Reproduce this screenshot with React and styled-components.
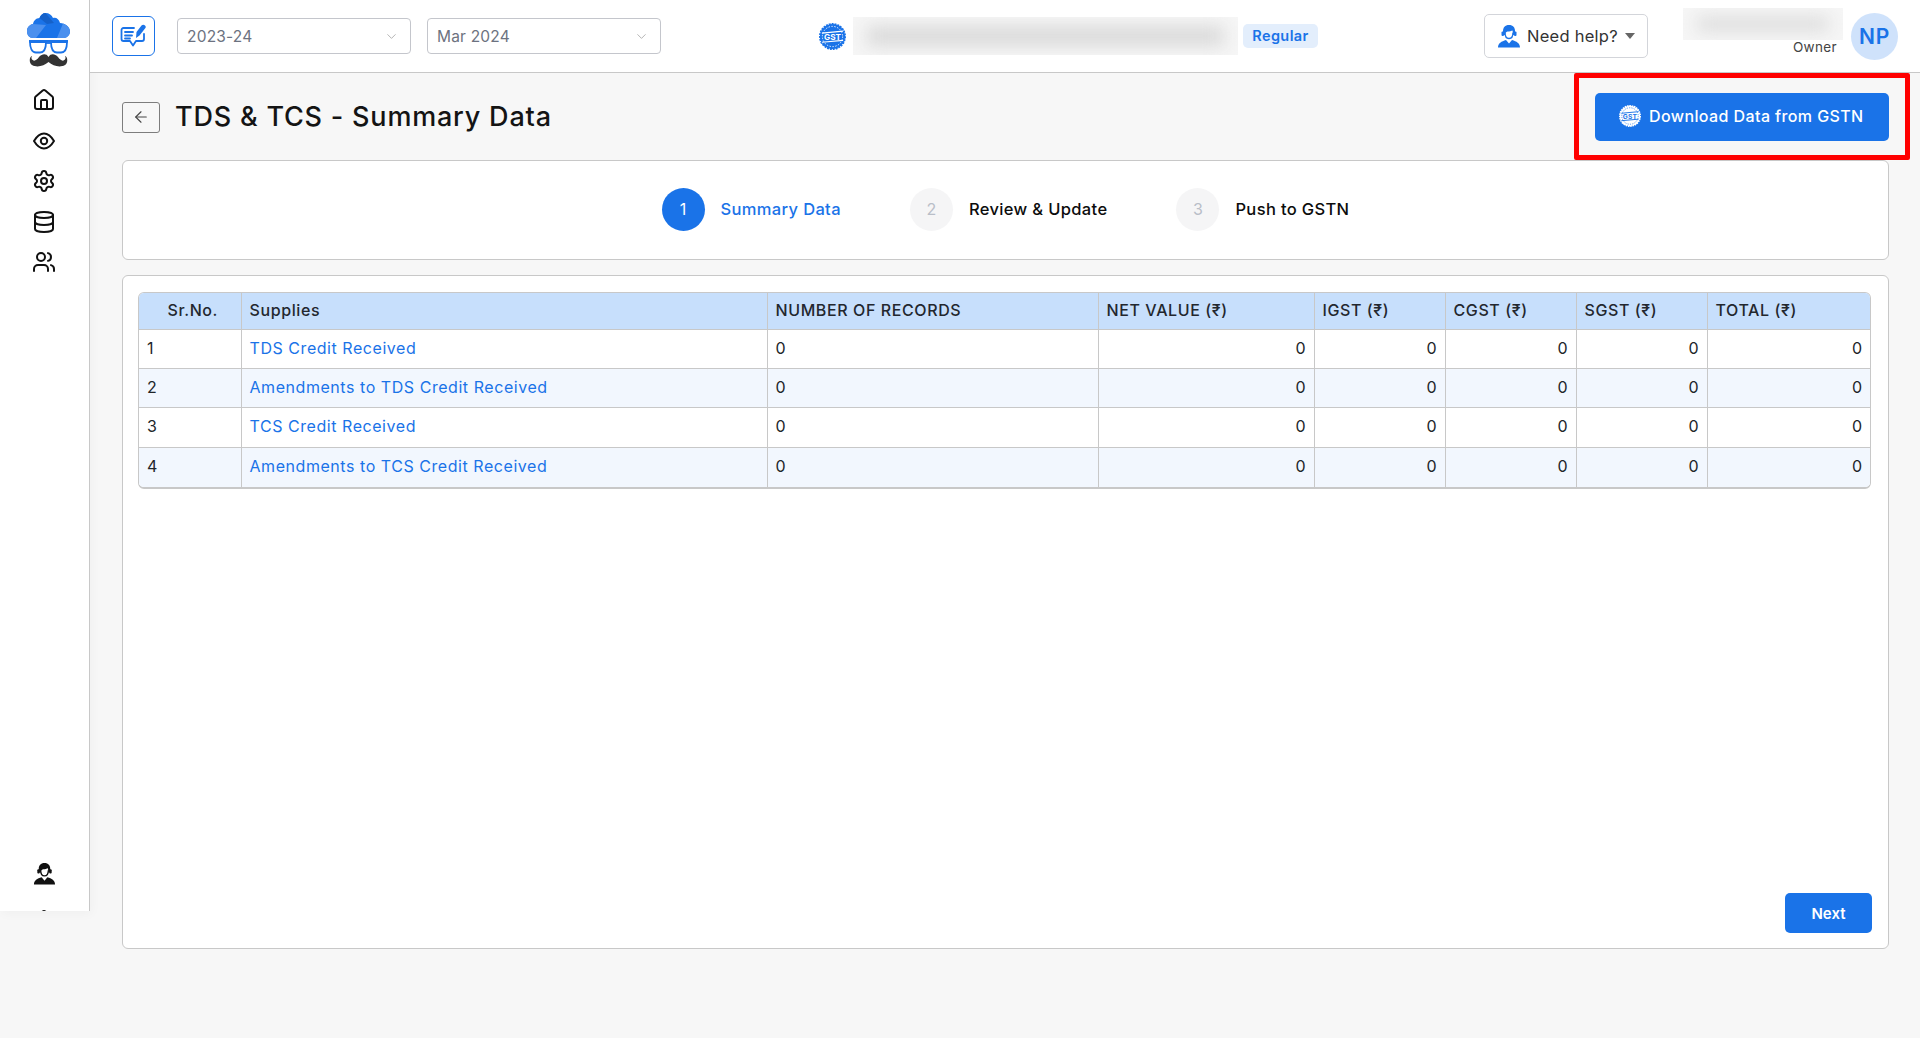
import React from "react";
import styled, {createGlobalStyle} from "styled-components";
import {House, Settings, Database, Users, ArrowLeft, ChevronDown} from "lucide-react";

const blue = "#1a73e8";
const line = "#c8c8c8";

const GlobalStyle = createGlobalStyle`
  html, body {
    margin: 0;
    padding: 0;
    background: #f7f7f7;
    font-family: Inter, "Noto Sans", sans-serif;
    color: #212529;
  }
  * {
    box-sizing: border-box;
  }
`;

const Page = styled.div`
  display: flex;
  align-items: flex-start;
  width: 1920px;
  min-height: 1038px;
  background: #f7f7f7;
`;

const Sidebar = styled.aside`
  flex: 0 0 90px;
  height: 911px;
  display: flex;
  flex-direction: column;
  align-items: center;
  padding: 13px 1px 0 0;
  background: #fff;
  border-right: 1px solid ${line};
  box-shadow: 2px 3px 10px rgba(0, 0, 0, 0.03);
  overflow: hidden;

  svg {
    flex-shrink: 0;
  }
`;

const LogoWrap = styled.div`
  height: 54px;
  margin-left: 8px;
`;

const SideNav = styled.nav`
  display: flex;
  flex-direction: column;
  gap: 16.5px;
  margin-top: 21px;
  color: #111;
`;

const SideBottom = styled.div`
  display: flex;
  flex-direction: column;
  align-items: center;
  gap: 24px;
  margin-top: 588px;
  color: #111;
`;

const Main = styled.div`
  flex: 1;
  min-width: 0;
`;

const TopBar = styled.header`
  height: 73px;
  display: flex;
  align-items: center;
  padding: 0 22px;
  background: #fff;
  border-bottom: 1px solid ${line};
`;

const EditButton = styled.button`
  width: 43px;
  height: 40px;
  margin-right: 22px;
  padding: 0;
  display: flex;
  align-items: center;
  justify-content: center;
  background: #fff;
  border: 1px solid ${blue};
  border-radius: 6px;
`;

const SelectBox = styled.div`
  width: 234px;
  height: 36px;
  margin-right: 16px;
  padding: 0 11px 0 9px;
  display: flex;
  align-items: center;
  justify-content: space-between;
  border: 1px solid #c4c6cc;
  border-radius: 4px;
  background: #fff;
  color: #6c7280;
  font-size: 15.5px;
  letter-spacing: 0.2px;
`;

const GstGroup = styled.div`
  margin-left: 142px;
  display: flex;
  align-items: center;
`;

const BlurBox = styled.div`
  position: relative;
  width: 385px;
  height: 38px;
  margin: 0 5px 0 7px;
  overflow: hidden;
  background: #f6f6f6;

  &::before {
    content: "";
    position: absolute;
    inset: 10px 14px;
    background: #d6d6d6;
    filter: blur(9px);
  }
`;

const Badge = styled.span`
  width: 75px;
  height: 24px;
  display: flex;
  align-items: center;
  justify-content: center;
  padding-bottom: 1px;
  border-radius: 5px;
  background: #e3eefc;
  color: ${blue};
  font-size: 14.5px;
  font-weight: 600;
  letter-spacing: 0.4px;
`;

const HelpButton = styled.button`
  margin-left: auto;
  width: 164px;
  height: 44px;
  padding: 0 0 0 12px;
  display: flex;
  align-items: center;
  gap: 6px;
  background: #fff;
  border: 1px solid #d3d5da;
  border-radius: 5px;
  color: #333;
  font-family: inherit;
  font-size: 16.5px;
  letter-spacing: 0.25px;
`;

const Caret = styled.span`
  width: 0;
  height: 0;
  margin-left: 1px;
  border-left: 5.5px solid transparent;
  border-right: 5.5px solid transparent;
  border-top: 6px solid #666;
`;

const UserBlock = styled.div`
  align-self: flex-start;
  width: 160px;
  margin: 8px 8px 0 35px;
  text-align: right;
`;

const BlurName = styled(BlurBox)`
  width: 160px;
  height: 32px;
  margin: 0;
`;

const Role = styled.div`
  padding-right: 6px;
  font-size: 13.5px;
  line-height: 15px;
  color: #444;
  letter-spacing: 0.35px;
`;

const Avatar = styled.div`
  width: 47px;
  height: 47px;
  display: flex;
  align-items: center;
  justify-content: center;
  border-radius: 50%;
  background: #cfe2fb;
  color: ${blue};
  font-size: 21px;
  font-weight: 600;
  letter-spacing: 0.8px;
`;

const Content = styled.main`
  padding: 20px 31px 0 32px;
`;

const PageHead = styled.div`
  position: relative;
  height: 48px;
  display: flex;
  align-items: center;
`;

const BackButton = styled.button`
  width: 38px;
  height: 31px;
  margin-right: 15px;
  padding: 0;
  display: flex;
  align-items: center;
  justify-content: center;
  background: #f7f7f7;
  border: 1px solid #7d7d7d;
  border-radius: 3px;
  color: #444;
`;

const Title = styled.h1`
  margin: 0 0 2px;
  font-size: 27px;
  font-weight: 500;
  letter-spacing: 0.8px;
  color: #141414;
`;

const DownloadButton = styled.button`
  margin-left: auto;
  width: 294px;
  height: 48px;
  padding: 0 0 2px 24px;
  display: flex;
  align-items: center;
  gap: 8px;
  background: ${blue};
  border: none;
  border-radius: 5px;
  color: #fff;
  font-family: inherit;
  font-size: 16px;
  font-weight: 500;
  letter-spacing: 0.4px;
`;

const RedMark = styled.div`
  position: absolute;
  top: -20px;
  right: -21px;
  width: 336px;
  height: 87px;
  border: 5px solid #f00;
  border-radius: 2px;
  pointer-events: none;
`;

const StepsCard = styled.section`
  height: 100px;
  margin-top: 19px;
  display: flex;
  align-items: center;
  justify-content: center;
  gap: 69px;
  padding-bottom: 2px;
  background: #fff;
  border: 1px solid ${line};
  border-radius: 6px;
`;

const Step = styled.div`
  display: flex;
  align-items: center;
  gap: 16px;
`;

const StepDot = styled.span`
  width: 43px;
  height: 43px;
  display: flex;
  align-items: center;
  justify-content: center;
  border-radius: 50%;
  background: ${p => (p.$active ? blue : "#f5f5f6")};
  color: ${p => (p.$active ? "#fff" : "#b9bec8")};
  font-size: 16px;
`;

const StepLabel = styled.span`
  font-size: 16.5px;
  font-weight: 500;
  letter-spacing: 0.35px;
  color: ${p => (p.$active ? blue : "#0c0c0c")};
`;

const TableCard = styled.section`
  height: 674px;
  margin-top: 15px;
  padding: 16px 17px 15px 15px;
  display: flex;
  flex-direction: column;
  background: #fff;
  border: 1px solid ${line};
  border-radius: 6px;
`;

const TableWrap = styled.div`
  border: 1px solid ${line};
  border-bottom-width: 2px;
  border-radius: 6px;
  overflow: hidden;
`;

const Table = styled.table`
  width: 100%;
  table-layout: fixed;
  border-collapse: collapse;
  font-size: 16px;
`;

const HeadCell = styled.th`
  height: 36px;
  padding: ${p => (p.$center ? "0 5px 2px 11px" : "0 8px 2px")};
  background: #c7dffc;
  border-left: 1px solid ${line};
  border-bottom: 1px solid ${line};
  text-align: ${p => (p.$center ? "center" : "left")};
  font-weight: 550;
  color: #23272e;
  letter-spacing: 0.6px;
  white-space: nowrap;

  &:first-child {
    border-left: none;
  }
`;

const Row = styled.tr`
  background: ${p => (p.$alt ? "#f2f7fe" : "#fff")};
`;

const Cell = styled.td`
  height: 39.4px;
  padding: 0 8px 2px;
  border-left: 1px solid ${line};
  border-bottom: 1px solid ${line};
  text-align: ${p => (p.$right ? "right" : "left")};

  &:first-child {
    border-left: none;
  }

  tr:last-child > & {
    border-bottom: none;
  }
`;

const RowLink = styled.a`
  color: ${blue};
  text-decoration: none;
  letter-spacing: 0.55px;
`;

const NextButton = styled.button`
  margin-top: auto;
  align-self: flex-end;
  width: 87px;
  height: 40px;
  margin-right: -1px;
  background: ${blue};
  border: none;
  border-radius: 5px;
  color: #fff;
  font-family: inherit;
  font-size: 15px;
  font-weight: 600;
`;

function Logo() {
    return (
        <svg width="43" height="54" viewBox="0 0 43 54">
            <path fill="#1a73e8" d="M6 25C2 25 0 22 0 18C0 14 3 11.5 6 11C6.5 8 9 5 12.5 5C13.5 2 16 0 18.5 0C22 0 25 2 26 5C29 4 32 6 33 10C38 10 43 14 43 18.5C43 22 40 25 37 25Z"/>
            <path fill="#4b90ee" d="M6 25C2 25 0 22 0 18C0 14 3 11.5 6 11L19 12L9 25ZM30 25L36 10.5C40 12 43 15 43 18.5C43 22 40 25 37 25Z"/>
            <path fill="#1561c9" d="M12.5 5C13.5 2 16 0 18.5 0L27 10L20 11Z"/>
            <g fill="none" stroke="#1a73e8" strokeWidth="1.8">
                <path d="M3 29H19C19 34 18 39.5 13 39.5H9C5 39.5 3 35 3 29Z"/>
                <path d="M24 29H40C40 35 38 39.5 34 39.5H30C25 39.5 24 34 24 29Z"/>
                <path d="M19 30H24"/>
            </g>
            <path fill="#1a73e8" d="M2 27H41V29.5H2Z"/>
            <path fill="#333" d="M21.5 44C19 40 15 41 12 44C10 47 7 49 5 46.5C4 45 4.5 44 5 43C2 44 2 50 5 52C10 55 17 53 21.5 49C26 53 33 55 38 52C41 50 41 44 38 43C38.5 44 39 45 38 46.5C36 49 33 47 31 44C28 41 24 40 21.5 44Z"/>
        </svg>
    );
}

function EditIcon() {
    return (
        <svg width="27" height="24" viewBox="0 0 27 24" fill="none" stroke="#1a73e8" strokeWidth="1.8" strokeLinecap="round" strokeLinejoin="round">
            <path d="M14 4H3.5A2 2 0 0 0 1.5 6V15A2 2 0 0 0 3.5 17H10L13 21.5L16 17H22A2 2 0 0 0 24 15V10"/>
            <path d="M5 8H13M5 11.5H12M5 14.5H10"/>
            <path fill="#1a73e8" stroke="none" d="M16 14L16.5 8L21.5 1.5C22.5 0.5 24 0.5 25 1.5C26 2.5 26 3.5 25 4.5L19.5 11.5Z"/>
        </svg>
    );
}

function GstSeal({size, bg, fg}) {
    return (
        <svg width={size} height={size} viewBox="0 0 28 28">
            <circle cx="14" cy="14" r="13" fill={bg} stroke={bg} strokeWidth="2" strokeDasharray="2 1"/>
            <circle cx="14" cy="14" r="10.5" fill="none" stroke={fg} strokeWidth="0.9" strokeDasharray="1.5 1.5"/>
            <path fill="none" stroke={fg} strokeWidth="1.2" d="M3 10.5L25 8.5M3 20L25 18"/>
            <text x="14" y="18" textAnchor="middle" fontSize="8.5" fontWeight="700" fontFamily="Inter, sans-serif" fill={fg}>GST</text>
        </svg>
    );
}

function AgentIcon({color, size}) {
    return (
        <svg width={size} height={size} viewBox="0 0 24 24" fill={color}>
            <path d="M12 1C8 1 6 3.6 6 7V11H8C8 9 9 8 10.5 7.5C12.5 7.5 14.5 7 15.5 6.5C16 8 16 9.5 16 11H18V7C18 3.6 16 1 12 1Z"/>
            <path fill="none" stroke={color} strokeWidth="1.4" d="M8 8.5C8 12.5 9.8 14.5 12 14.5C14.2 14.5 16 12.5 16 8.5"/>
            <rect x="4.5" y="7.5" width="2.5" height="4.5" rx="1"/>
            <rect x="17" y="7.5" width="2.5" height="4.5" rx="1"/>
            <path d="M1 23.5C1 19 4.5 17.5 9 16L12 19.5L15 16C19.5 17.5 23 19 23 23.5Z"/>
        </svg>
    );
}

function EyeIcon() {
    return (
        <svg width="24" height="24" viewBox="0 0 24 24" fill="none" stroke="currentColor" strokeWidth="2" strokeLinejoin="round">
            <path d="M2 12C5 7 8.5 4.5 12 4.5C15.5 4.5 19 7 22 12C19 17 15.5 19.5 12 19.5C8.5 19.5 5 17 2 12Z"/>
            <circle cx="12" cy="12" r="3.2"/>
        </svg>
    );
}

const rows = [
    {no: 1, name: "TDS Credit Received"},
    {no: 2, name: "Amendments to TDS Credit Received"},
    {no: 3, name: "TCS Credit Received"},
    {no: 4, name: "Amendments to TCS Credit Received"},
];

const colWidths = [102, 526, 331, 216, 131, 131, 131, 163];

const heads = ["Supplies", "NUMBER OF RECORDS", "NET VALUE (₹)", "IGST (₹)", "CGST (₹)", "SGST (₹)", "TOTAL (₹)"];

const steps = [
    {n: 1, label: "Summary Data", active: true},
    {n: 2, label: "Review & Update"},
    {n: 3, label: "Push to GSTN"},
];

export default function App() {
    return (
        <>
            <GlobalStyle/>
            <Page>
                <Sidebar>
                    <LogoWrap><Logo/></LogoWrap>
                    <SideNav>
                        <House size={24}/>
                        <EyeIcon/>
                        <Settings size={24}/>
                        <Database size={24}/>
                        <Users size={24}/>
                    </SideNav>
                    <SideBottom>
                        <AgentIcon color="#111" size={23}/>
                        <House size={24}/>
                    </SideBottom>
                </Sidebar>

                <Main>
                    <TopBar>
                        <EditButton><EditIcon/></EditButton>
                        <SelectBox>2023-24<ChevronDown size={15} strokeWidth={1} color="#888"/></SelectBox>
                        <SelectBox>Mar 2024<ChevronDown size={15} strokeWidth={1} color="#888"/></SelectBox>
                        <GstGroup>
                            <GstSeal size={27} bg={blue} fg="#fff"/>
                            <BlurBox/>
                            <Badge>Regular</Badge>
                        </GstGroup>
                        <HelpButton>
                            <AgentIcon color={blue} size={24}/>
                            Need help?
                            <Caret/>
                        </HelpButton>
                        <UserBlock>
                            <BlurName/>
                            <Role>Owner</Role>
                        </UserBlock>
                        <Avatar>NP</Avatar>
                    </TopBar>

                    <Content>
                        <PageHead>
                            <BackButton><ArrowLeft size={18} strokeWidth={1.5}/></BackButton>
                            <Title>TDS &amp; TCS - Summary Data</Title>
                            <DownloadButton>
                                <GstSeal size={22} bg="#fff" fg={blue}/>
                                Download Data from GSTN
                            </DownloadButton>
                            <RedMark/>
                        </PageHead>

                        <StepsCard>
                            {steps.map(s => (
                                <Step key={s.n}>
                                    <StepDot $active={s.active}>{s.n}</StepDot>
                                    <StepLabel $active={s.active}>{s.label}</StepLabel>
                                </Step>
                            ))}
                        </StepsCard>

                        <TableCard>
                            <TableWrap>
                                <Table>
                                    <colgroup>
                                        {colWidths.map((w, i) => <col key={i} style={{width: w}}/>)}
                                    </colgroup>
                                    <thead>
                                        <tr>
                                            <HeadCell $center>Sr.No.</HeadCell>
                                            {heads.map(h => <HeadCell key={h}>{h}</HeadCell>)}
                                        </tr>
                                    </thead>
                                    <tbody>
                                        {rows.map(r => (
                                            <Row key={r.no} $alt={r.no % 2 === 0}>
                                                <Cell>{r.no}</Cell>
                                                <Cell><RowLink href="#">{r.name}</RowLink></Cell>
                                                <Cell>0</Cell>
                                                <Cell $right>0</Cell>
                                                <Cell $right>0</Cell>
                                                <Cell $right>0</Cell>
                                                <Cell $right>0</Cell>
                                                <Cell $right>0</Cell>
                                            </Row>
                                        ))}
                                    </tbody>
                                </Table>
                            </TableWrap>
                            <NextButton>Next</NextButton>
                        </TableCard>
                    </Content>
                </Main>
            </Page>
        </>
    );
}
